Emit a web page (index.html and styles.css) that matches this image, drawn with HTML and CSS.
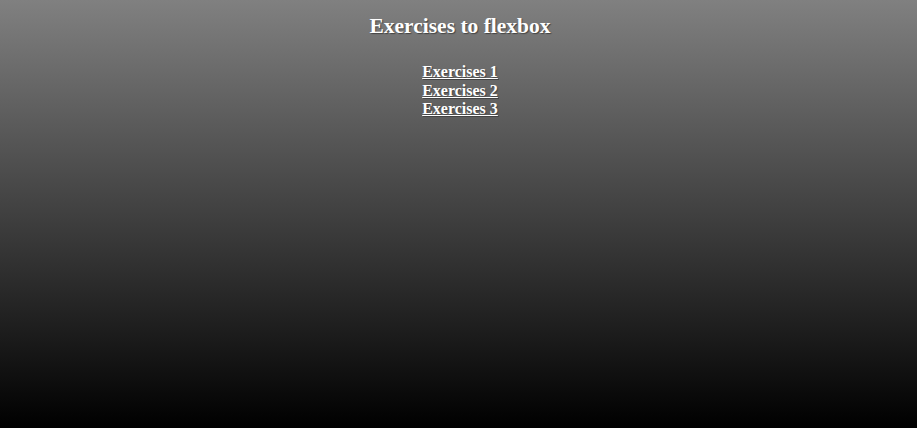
FILE: index.html
```html
<!DOCTYPE html>
<html>
<head>
<meta charset="utf-8">
<link rel="stylesheet" href="styles.css">
</head>
<body>
<h1 class="title">Exercises to flexbox</h1>
<nav class="links">
<a class="link" href="#">Exercises 1</a>
<a class="link" href="#">Exercises 2</a>
<a class="link" href="#">Exercises 3</a>
</nav>
</body>
</html>
```
FILE: styles.css
```css
html, body {
  height: 100%;
}
body {
  margin: 0;
  padding-left: 3px;
  box-sizing: border-box;
  background: linear-gradient(#808080, #000000);
  font-family: "Liberation Serif", serif;
  color: #fff;
  text-align: center;
}
.title {
  font-size: 21.5px;
  font-weight: bold;
  margin: 0;
  padding-top: 14px;
  text-shadow: 1px 1px 1px #444;
}
.links {
  display: flex;
  flex-direction: column;
  align-items: center;
  margin-top: 24px;
}
.link {
  color: #fff;
  font-size: 16px;
  font-weight: bold;
  line-height: 18.5px;
  text-shadow: 1px 1px 1px #444;
}
```
